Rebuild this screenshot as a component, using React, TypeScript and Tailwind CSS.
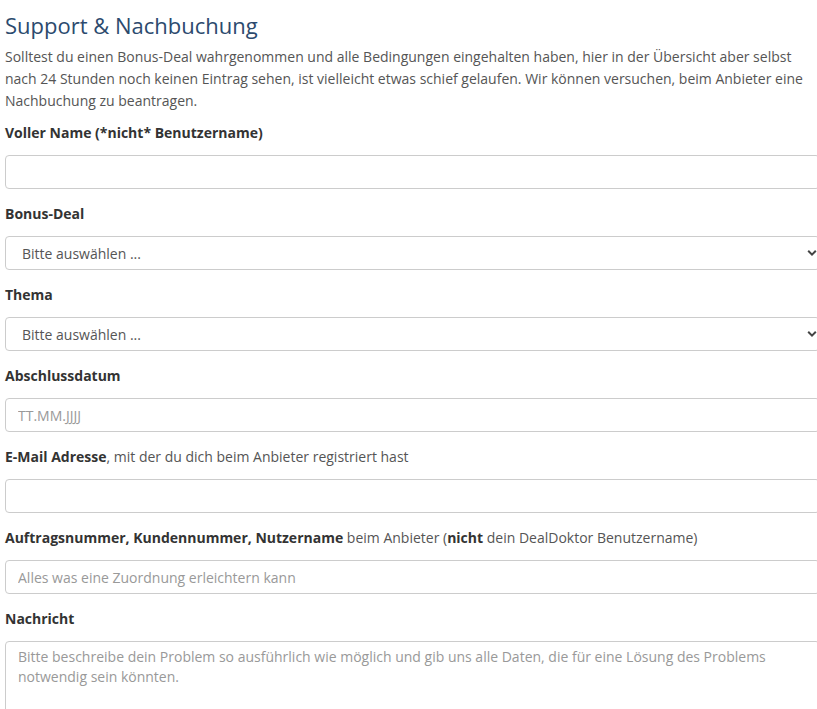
import { ReactNode } from "react";

function Label({ children }: { children: ReactNode }) {
    return <label className="mb-[11px] block text-[14px] leading-[22px] text-[#555]">{children}</label>;
}

function Chevron() {
    return (
        <svg
            className="pointer-events-none absolute right-[3px] top-1/2 -translate-y-1/2"
            width="10"
            height="7"
            viewBox="0 0 10 7"
            fill="none"
        >
            <path d="M1.2 1.3 5 5.1 8.8 1.3" stroke="#444" strokeWidth="2" />
        </svg>
    );
}

const inputCls =
    "block h-[34px] w-full rounded-[4px] border border-[#ccc] bg-white px-3 text-[14px] text-[#555] outline-none placeholder:text-[#999]";

export default function App() {
    return (
        <div className="min-h-screen w-full overflow-hidden bg-white" style={{ fontFamily: '"Open Sans", sans-serif' }}>
            <div className="w-[820px] pl-[5px] pt-[13px]">
                <h2 className="mb-[9px] text-[22px] leading-[24px] text-[#2c4a6e]">Support &amp; Nachbuchung</h2>
                <p className="mb-[10px] text-[14px] leading-[22px] text-[#555]">
                    Solltest du einen Bonus-Deal wahrgenommen und alle Bedingungen eingehalten haben, hier in der Übersicht aber selbst nach 24 Stunden noch keinen Eintrag sehen, ist vielleicht etwas schief gelaufen. Wir können versuchen, beim Anbieter eine Nachbuchung zu beantragen.
                </p>

                <form className="flex flex-col gap-[14px]">
                    <div>
                        <Label><b className="font-bold text-[#333]">Voller Name (*nicht* Benutzername)</b></Label>
                        <input className={inputCls} />
                    </div>

                    <div>
                        <Label><b className="font-bold text-[#333]">Bonus-Deal</b></Label>
                        <div className="relative">
                            <select className={`${inputCls} appearance-none pl-[16px]`}>
                                <option>Bitte auswählen ...</option>
                            </select>
                            <Chevron />
                        </div>
                    </div>

                    <div>
                        <Label><b className="font-bold text-[#333]">Thema</b></Label>
                        <div className="relative">
                            <select className={`${inputCls} appearance-none pl-[16px]`}>
                                <option>Bitte auswählen ...</option>
                            </select>
                            <Chevron />
                        </div>
                    </div>

                    <div>
                        <Label><b className="font-bold text-[#333]">Abschlussdatum</b></Label>
                        <input className={inputCls} placeholder="TT.MM.JJJJ" />
                    </div>

                    <div>
                        <Label>
                            <b className="font-bold text-[#333]">E-Mail Adresse</b>, mit der du dich beim Anbieter registriert hast
                        </Label>
                        <input className={inputCls} />
                    </div>

                    <div>
                        <Label>
                            <b className="font-bold text-[#333]">Auftragsnummer, Kundennummer, Nutzername</b> beim Anbieter (
                            <b className="font-bold text-[#333]">nicht</b> dein DealDoktor Benutzername)
                        </Label>
                        <input className={inputCls} placeholder="Alles was eine Zuordnung erleichtern kann" />
                    </div>

                    <div>
                        <Label><b className="font-bold text-[#333]">Nachricht</b></Label>
                        <textarea
                            rows={5}
                            className="block w-full resize-none rounded-[4px] border border-[#ccc] bg-white px-3 py-[5px] text-[14px] leading-[20px] text-[#555] outline-none placeholder:text-[#999]"
                            placeholder="Bitte beschreibe dein Problem so ausführlich wie möglich und gib uns alle Daten, die für eine Lösung des Problems notwendig sein könnten."
                        />
                    </div>
                </form>
            </div>
        </div>
    );
}
